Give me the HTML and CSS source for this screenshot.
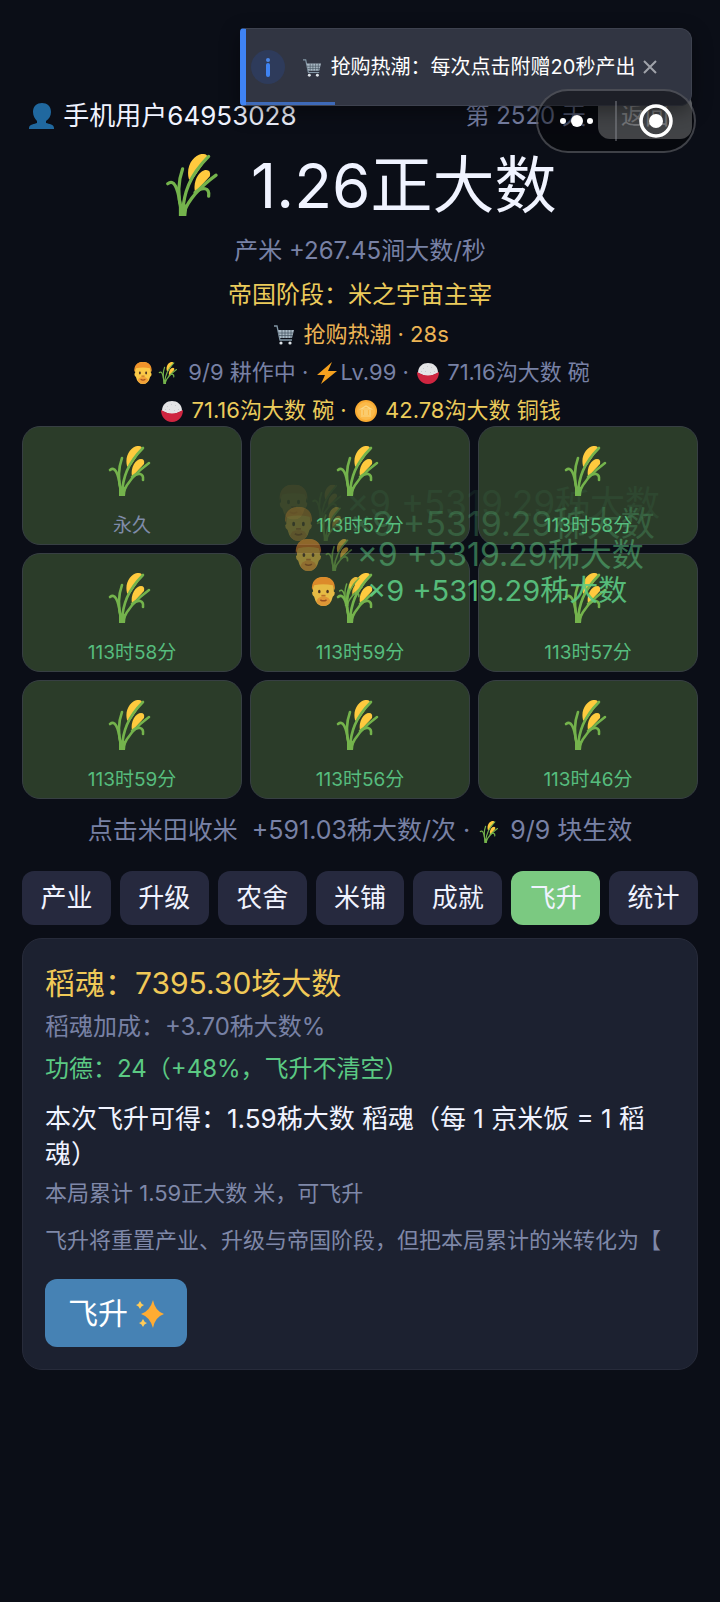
FILE: index.html
```html
<!DOCTYPE html>
<html lang="zh-CN">
<head>
    <meta charset="UTF-8">
    <meta name="viewport" content="width=device-width, initial-scale=1.0">
    <title>米之宇宙</title>
    <link rel="stylesheet" href="styles.css">
</head>
<body>
    <!-- 图标 -->
    <svg class="sprite" aria-hidden="true">
        <symbol id="rice" viewBox="2 0 50 50">
            <path d="M22 20C19 8 28-1 34 0q3 0 3 3L24 22z" fill="#ffca3e"/>
            <path d="M27 31C25 21 31 13 36 13q4 0 3 5z" fill="#ffca3e"/>
            <g fill="none" stroke="#74b34c" stroke-width="2.6" stroke-linecap="round">
                <path d="M16 46C13 34 13 23 17 12"/>
                <path d="M15 40C13 27 10 20 5 24"/>
                <path d="M17 47C18 32 22 18 38 2"/>
                <path d="M18 47C23 34 33 25 44 17"/>
                <path d="M27 31C33 26 39 27 38 34"/>
            </g>
            <path d="M14 40l7 1-1 9h-6z" fill="#74b34c"/>
        </symbol>
        <symbol id="farmer" viewBox="0 0 24 28">
            <path d="M2 14C1 3 6 0 12 0s11 3 10 14l1 1q0 3-2 4-2 9-9 9T3 19q-2-1-2-4z" fill="#fbc947"/>
            <path d="M1 13C0 4 5 0 12 0s12 4 11 13l-2-5Q12 6 3 8z" fill="#f0932b"/>
            <path d="M5 24q1-5 7-5t7 5q-3 4-7 4t-7-4z" fill="#f2a038"/>
            <path d="M9 22q3 2 6 0" fill="none" stroke="#a8541f" stroke-width="1.4"/>
            <ellipse cx="8" cy="14" rx="1.2" ry="1.8" fill="#4e3324"/>
            <ellipse cx="16" cy="14" rx="1.2" ry="1.8" fill="#4e3324"/>
            <path d="M10 18h4" stroke="#c9752b" stroke-width="1.6"/>
        </symbol>
        <symbol id="cart" viewBox="0 0 22 20">
            <path d="M1 1h3l3 14h12" fill="none" stroke="#8296a5" stroke-width="1.3"/>
            <path d="M5 5h16l-2 8H7z" fill="#a9b8c4"/>
            <path d="M5 8h15M6 10.5h14M9 5v8M12 5v8M15 5v8M18 5v8" stroke="#43515e" stroke-width=".7"/>
            <circle cx="8" cy="18" r="1.6" fill="#dde3e8"/>
            <circle cx="17" cy="18" r="1.6" fill="#dde3e8"/>
        </symbol>
        <symbol id="bolt" viewBox="0 0 20 22">
            <path d="M15 0L0 13h8L4 22 20 9h-9z" fill="#f5a11f"/>
        </symbol>
        <symbol id="bowl" viewBox="0 0 22 22">
            <path d="M1 11C1 4 6 1 11 1s10 3 10 10l-10 4z" fill="#e4e4e6"/>
            <path d="M0 10q11 7 22 0c0 6-4 12-11 12S0 16 0 10z" fill="#cf2540"/>
            <path d="M6 6l1 1M10 4l1 1M14 6l1-1M8 10l1-1M13 10l1 1M17 9l1 1M4 10l1-1" stroke="#c9cbd0" stroke-width="1"/>
        </symbol>
        <symbol id="coin" viewBox="0 0 22 22">
            <circle cx="11" cy="11" r="11" fill="#f9ab33"/>
            <circle cx="11" cy="11" r="9" fill="#fbba4a"/>
            <path d="M6 9l5-3 5 3zM7 10v5M10 10v5M12 10v5M15 10v5M6 16h10" fill="none" stroke="#fbd786" stroke-width="1.2"/>
        </symbol>
        <symbol id="user" viewBox="0 0 26 26">
            <path d="M13 0c5 0 9 3 9 9 0 4-2 7-5 9v2c3 1 8 1 8 5v1H0v-1c0-4 6-4 8-5v-2c-2-2-4-5-4-9 0-6 4-9 9-9z" fill="#20689f"/>
        </symbol>
        <symbol id="sparkles" viewBox="0 0 28 28">
            <path d="M17 0q2 11 11 14-9 3-11 14-3-11-12-14 9-3 12-14z" fill="#ffac33"/>
            <path d="M4 1q1 3 4 4-3 1-4 4-1-3-4-4 3-1 4-4zM7 19q1 3 4 4-3 1-4 4-1-3-4-4 3-1 4-4z" fill="#ffcb57"/>
        </symbol>
    </svg>

    <main class="app">
        <header class="header">
            <div class="user"><svg class="icon icon-lg"><use href="#user"/></svg> 手机用户64953028</div>
            <div class="header-right">
                <span class="day">第 2520 天</span>
                <button class="back-btn" type="button">返回</button>
            </div>
        </header>

        <h1 class="total"><svg class="icon-total"><use href="#rice"/></svg> 1.26正大数</h1>

        <div class="stats">
            <p class="rate">产米 +267.45涧大数/秒</p>
            <p class="stage">帝国阶段：米之宇宙主宰</p>
            <p class="event"><svg class="icon"><use href="#cart"/></svg> 抢购热潮 · 28s</p>
            <p class="farm"><svg class="icon"><use href="#farmer"/></svg><svg class="icon"><use href="#rice"/></svg> 9/9 耕作中 · <svg class="icon"><use href="#bolt"/></svg>Lv.99 · <svg class="icon"><use href="#bowl"/></svg> 71.16沟大数 碗</p>
            <p class="wallet"><svg class="icon"><use href="#bowl"/></svg> 71.16沟大数 碗 · <svg class="icon"><use href="#coin"/></svg> 42.78沟大数 铜钱</p>
        </div>

        <section class="field">
            <button class="plot" type="button"><svg class="plot-icon"><use href="#rice"/></svg><span class="plot-time forever">永久</span></button>
            <button class="plot" type="button"><svg class="plot-icon"><use href="#rice"/></svg><span class="plot-time">113时57分</span></button>
            <button class="plot" type="button"><svg class="plot-icon"><use href="#rice"/></svg><span class="plot-time">113时58分</span></button>
            <button class="plot" type="button"><svg class="plot-icon"><use href="#rice"/></svg><span class="plot-time">113时58分</span></button>
            <button class="plot" type="button"><svg class="plot-icon"><use href="#rice"/></svg><span class="plot-time">113时59分</span></button>
            <button class="plot" type="button"><svg class="plot-icon"><use href="#rice"/></svg><span class="plot-time">113时57分</span></button>
            <button class="plot" type="button"><svg class="plot-icon"><use href="#rice"/></svg><span class="plot-time">113时59分</span></button>
            <button class="plot" type="button"><svg class="plot-icon"><use href="#rice"/></svg><span class="plot-time">113时56分</span></button>
            <button class="plot" type="button"><svg class="plot-icon"><use href="#rice"/></svg><span class="plot-time">113时46分</span></button>

            <!-- 飘字 -->
            <div class="float float-4"><svg class="float-icon"><use href="#farmer"/></svg><svg class="float-icon"><use href="#rice"/></svg>×9 +5319.29秭大数</div>
            <div class="float float-3"><svg class="float-icon"><use href="#farmer"/></svg><svg class="float-icon"><use href="#rice"/></svg>×9 +5319.29秭大数</div>
            <div class="float float-2"><svg class="float-icon"><use href="#farmer"/></svg><svg class="float-icon"><use href="#rice"/></svg>×9 +5319.29秭大数</div>
            <div class="float float-1"><svg class="float-icon"><use href="#farmer"/></svg><svg class="float-icon"><use href="#rice"/></svg>×9 +5319.29秭大数</div>
        </section>

        <p class="hint">点击米田收米&nbsp; +591.03秭大数/次 · <svg class="icon"><use href="#rice"/></svg> 9/9 块生效</p>

        <nav class="tabs">
            <button class="tab" type="button">产业</button>
            <button class="tab" type="button">升级</button>
            <button class="tab" type="button">农舍</button>
            <button class="tab" type="button">米铺</button>
            <button class="tab" type="button">成就</button>
            <button class="tab active" type="button">飞升</button>
            <button class="tab" type="button">统计</button>
        </nav>

        <section class="panel">
            <h2 class="soul">稻魂：7395.30垓大数</h2>
            <p class="bonus">稻魂加成：+3.70秭大数%</p>
            <p class="merit">功德：24（+48%，飞升不清空）</p>
            <p class="gain">本次飞升可得：1.59秭大数 稻魂（每 1 京米饭 = 1 稻魂）</p>
            <p class="progress-text">本局累计 1.59正大数 米，可飞升</p>
            <p class="desc">飞升将重置产业、升级与帝国阶段，但把本局累计的米转化为【</p>
            <button class="ascend-btn" type="button">飞升 <svg class="icon icon-lg"><use href="#sparkles"/></svg></button>
        </section>
    </main>

    <div class="toast" role="status">
        <svg class="toast-info" viewBox="0 0 34 34">
            <circle cx="17" cy="17" r="17" fill="#2e3b5b"/>
            <circle cx="17" cy="10" r="2" fill="#4a86e8"/>
            <path d="M17 15v10" stroke="#3f83f3" stroke-width="4" stroke-linecap="round"/>
        </svg>
        <span class="toast-text"><svg class="icon"><use href="#cart"/></svg> 抢购热潮：每次点击附赠20秒产出</span>
        <button class="toast-close" type="button" aria-label="关闭">
            <svg viewBox="0 0 14 14"><path d="M1 1l12 12M13 1L1 13" stroke="#a0a3aa" stroke-width="2"/></svg>
        </button>
        <span class="toast-bar"></span>
    </div>

    <div class="capsule">
        <button class="capsule-btn" type="button" aria-label="更多">
            <svg viewBox="0 0 36 36" fill="#fff"><circle cx="4" cy="18" r="3"/><circle cx="18" cy="18" r="6"/><circle cx="31" cy="18" r="3"/></svg>
        </button>
        <button class="capsule-btn" type="button" aria-label="关闭小程序">
            <svg viewBox="0 0 36 36"><circle cx="18" cy="18" r="15" fill="none" stroke="#fff" stroke-width="3.5"/><circle cx="18" cy="18" r="7" fill="#fff"/></svg>
        </button>
    </div>
</body>
</html>
```
FILE: styles.css
```css
* {
    margin: 0;
    padding: 0;
    box-sizing: border-box;
}

body {
    background: #0b0e17;
    color: #f0f3ff;
    min-height: 100vh;
    font-family: Inter, 'Noto Sans CJK SC', sans-serif;
    font-size: 24px;
    line-height: 32px;
}

button {
    font: inherit;
    color: inherit;
    border: none;
    background: none;
    cursor: pointer;
}

h1,
h2 {
    font-weight: 400;
}

.sprite {
    position: absolute;
    width: 0;
    height: 0;
}

.app {
    padding: 93px 22px 40px;
}

.icon {
    width: 22px;
    height: 22px;
    margin: 0 2px;
    vertical-align: -4px;
}

.icon-lg {
    width: 28px;
    height: 26px;
    margin: 0;
}

/* 顶部 */
.header {
    display: flex;
    justify-content: space-between;
    align-items: center;
    padding: 0 6px;
}

.user {
    font-size: 26px;
}

.header-right {
    display: flex;
    align-items: center;
    gap: 12px;
}

.day {
    font-size: 24px;
    color: #7881a5;
}

.back-btn {
    width: 94px;
    height: 46px;
    border-radius: 12px;
    background: #6e7176;
    color: #c3c5ca;
}

.total {
    font-size: 62px;
    line-height: 90px;
    margin-top: 2px;
    text-align: center;
}

.icon-total {
    width: 62px;
    height: 62px;
    margin-right: 8px;
    vertical-align: -8px;
}

/* 状态 */
.stats {
    display: flex;
    flex-direction: column;
    gap: 6px;
    margin-top: 4px;
    font-size: 22px;
    text-align: center;
}

.rate {
    font-size: 24px;
    color: #7881a5;
    margin-bottom: 6px;
}

.stage {
    font-size: 24px;
    color: #ebcb5b;
    margin-bottom: 1px;
}

.event {
    color: #ecb354;
}

.farm {
    color: #7881a5;
}

.wallet {
    color: #ebcb5b;
}

/* 米田 */
.field {
    position: relative;
    display: grid;
    grid-template-columns: repeat(3, 1fr);
    gap: 8px;
}

.plot {
    display: flex;
    flex-direction: column;
    align-items: center;
    gap: 16px;
    padding: 19px 0 4px;
    background: #2b3c29;
    border: 1px solid #373f43;
    border-radius: 18px;
}

.plot-icon {
    width: 50px;
    height: 50px;
}

.plot-time {
    font-size: 19px;
    line-height: 28px;
    color: #56bd7e;
}

.forever {
    color: #7f8ba8;
}

.float {
    position: absolute;
    left: 66%;
    transform: translate(-50%, -50%);
    display: flex;
    align-items: center;
    white-space: nowrap;
    pointer-events: none;
    color: #5bc983;
}

.float-icon {
    width: 1em;
    height: 1em;
}

.float-1 {
    top: 165px;
    font-size: 29px;
    opacity: 0.9;
}

.float-2 {
    top: 129px;
    font-size: 32px;
    opacity: 0.5;
}

.float-3 {
    top: 98px;
    font-size: 34px;
    opacity: 0.25;
}

.float-4 {
    top: 76px;
    font-size: 35px;
    opacity: 0.08;
}

.hint {
    margin-top: 15px;
    font-size: 25px;
    text-align: center;
    color: #7881a5;
}

/* 标签页 */
.tabs {
    display: flex;
    gap: 9px;
    margin-top: 25px;
}

.tab {
    flex: 1;
    height: 54px;
    font-size: 26px;
    background: #26293e;
    border-radius: 12px;
}

.tab.active {
    background: #7bc981;
}

/* 飞升面板 */
.panel {
    margin-top: 13px;
    padding: 22px;
    background: #1c2130;
    border: 1px solid #272b3a;
    border-radius: 20px;
}

.soul {
    font-size: 30px;
    line-height: 44px;
    color: #f0c957;
}

.bonus {
    margin-top: 6px;
    color: #7881a5;
}

.merit {
    margin-top: 10px;
    color: #5bc983;
}

.gain {
    margin-top: 16px;
    font-size: 26px;
    line-height: 35px;
}

.progress-text {
    margin-top: 6px;
    font-size: 22px;
    color: #7f88a8;
}

.desc {
    margin-top: 15px;
    font-size: 22px;
    color: #7f88a8;
    white-space: nowrap;
    overflow: hidden;
}

.ascend-btn {
    height: 68px;
    margin-top: 23px;
    padding: 0 23px;
    font-size: 30px;
    color: #fff;
    background: #4682b4;
    border-radius: 12px;
}

.ascend-btn .icon-lg {
    height: 28px;
}

/* 通知 */
.toast {
    position: absolute;
    top: 28px;
    right: 28px;
    display: flex;
    align-items: center;
    width: 452px;
    height: 78px;
    padding-left: 5px;
    background: #313542;
    border: 1px solid #3e424f;
    border-left: 6px solid #3f83f3;
    border-radius: 4px 12px 12px 4px;
    box-shadow: 0 6px 20px rgba(0, 0, 0, 0.4);
    font-size: 20px;
    color: #fff;
    white-space: nowrap;
}

.toast-info {
    width: 34px;
    height: 34px;
    margin-right: 14px;
}

.toast-text .icon {
    height: 18px;
    vertical-align: -3px;
}

.toast-close {
    width: 22px;
    height: 32px;
    margin-left: 4px;
}

.toast-close svg {
    width: 14px;
    height: 14px;
}

.toast-bar {
    position: absolute;
    left: 0;
    bottom: 0;
    width: 20%;
    height: 3px;
    background: #3e6ab8;
}

.capsule {
    position: absolute;
    top: 89px;
    right: 24px;
    display: flex;
    align-items: center;
    width: 160px;
    height: 64px;
    background: rgba(0, 0, 0, 0.4);
    border: 2px solid rgba(120, 122, 130, 0.5);
    border-radius: 32px;
}

.capsule-btn {
    flex: 1;
    height: 40px;
}

.capsule-btn + .capsule-btn {
    border-left: 2px solid rgba(150, 152, 160, 0.4);
}

.capsule-btn svg {
    width: 36px;
    height: 36px;
    vertical-align: middle;
}
```
